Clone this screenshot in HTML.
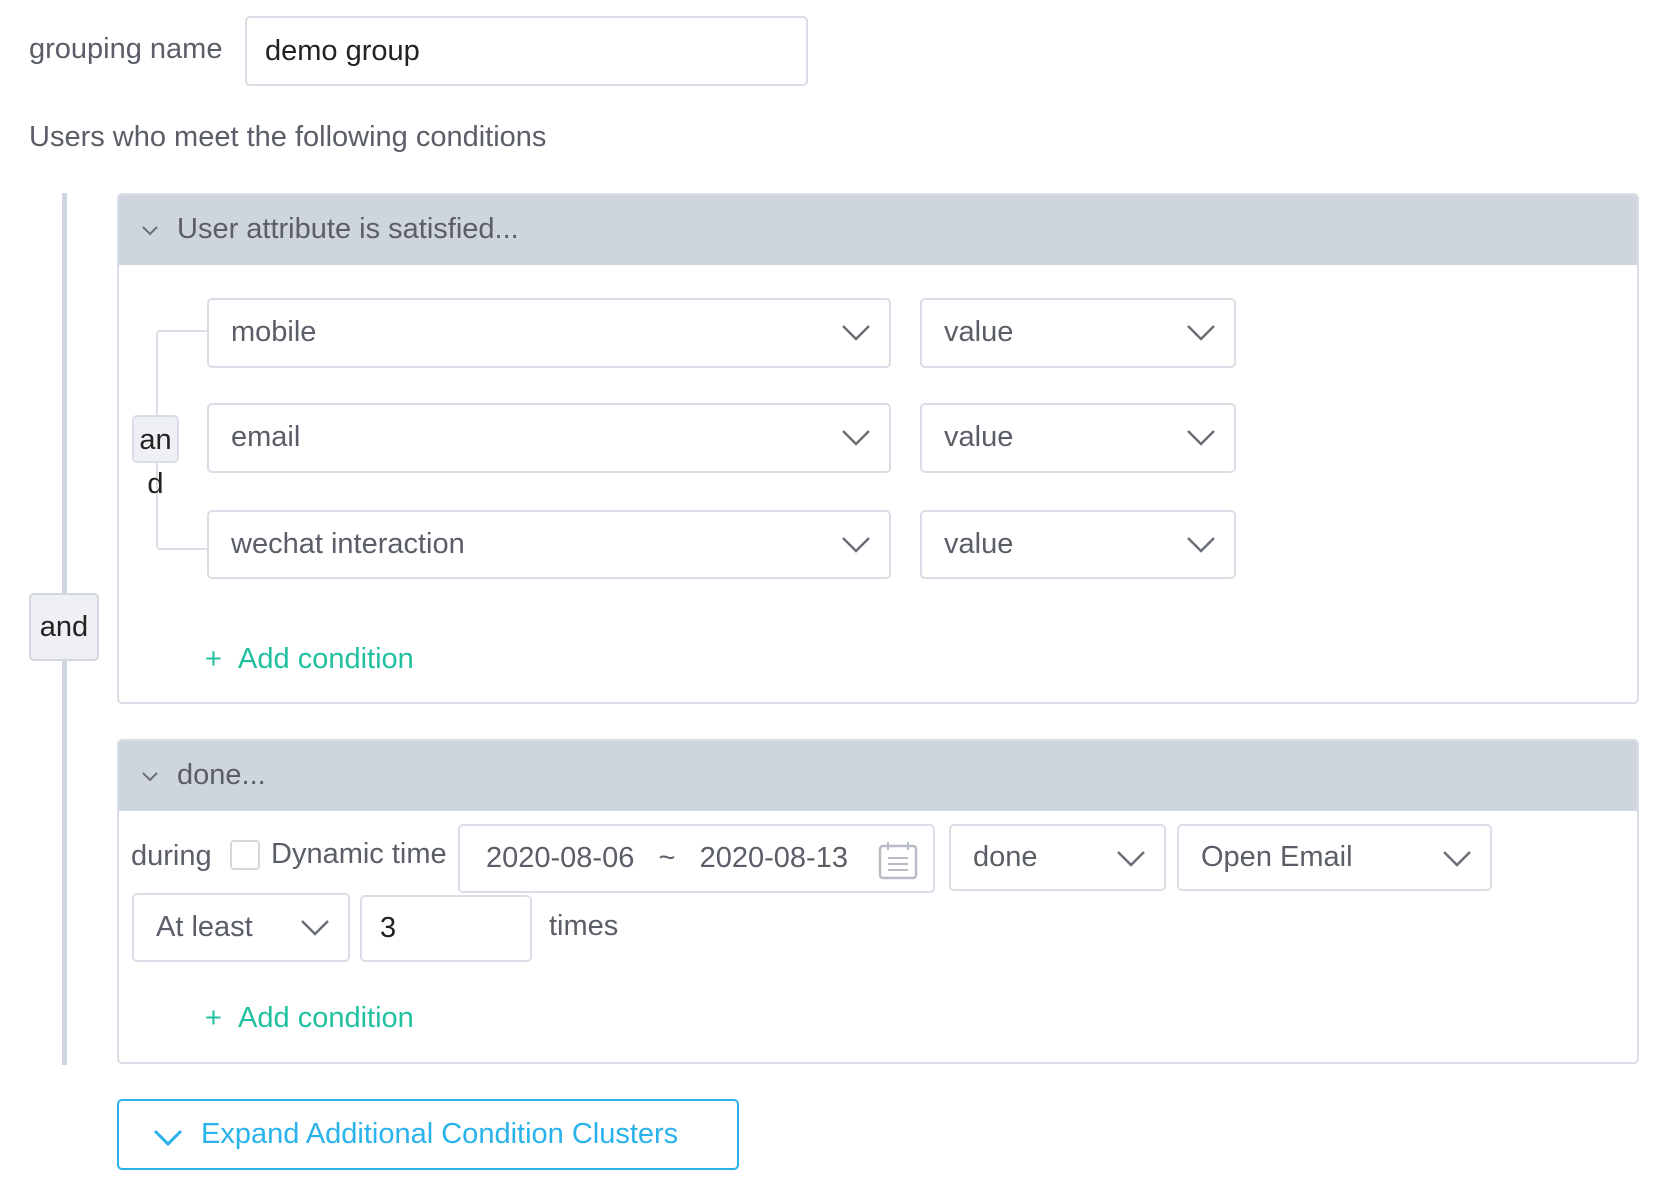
<!DOCTYPE html>
<html><head><meta charset="utf-8"><style>
*{box-sizing:border-box;margin:0;padding:0}
body{width:1660px;height:1188px;background:#fff;position:relative;overflow:hidden;font-family:"Liberation Sans",Arial,sans-serif;font-size:29px;color:#5a5e66}
.a{position:absolute}
.box{position:absolute;border:2px solid #d9dde5;border-radius:5px;background:#fff}
.sel{position:absolute;border:2px solid #d9dde5;border-radius:5px;background:#fff;line-height:64px;padding-left:22px;color:#5a5e66}
.chev{position:absolute;right:18px;top:24px;width:30px;height:18px}
.panel{position:absolute;left:117px;width:1522px;border:2px solid #d9dde5;border-radius:5px;background:#fff;overflow:hidden}
.hdr{height:70px;background:#ced5df;line-height:68px;padding-left:58px;color:#5a5e66;position:relative}
.hdr svg{position:absolute;left:22px;top:30px}
.green{color:#20c0a0}
</style></head><body>
<div class="a" style="left:29px;top:29px;line-height:40px">grouping name</div>
<div class="box" style="left:245px;top:16px;width:563px;height:70px;line-height:66px;padding-left:18px;color:#222">demo group</div>
<div class="a" style="left:29px;top:117px;line-height:40px">Users who meet the following conditions</div>

<div class="a" style="left:62px;top:193px;width:5px;height:872px;background:#ced5df"></div>
<div class="a" style="left:29px;top:593px;width:70px;height:68px;background:#eef0f3;border:2px solid #d3d8df;border-radius:5px;line-height:64px;text-align:center;color:#222">and</div>

<div class="panel" style="top:193px;height:511px">
 <div class="hdr"><svg width="18" height="12" viewBox="0 0 18 12"><path d="M2 2 L9 9 L16 2" fill="none" stroke="#6a6e76" stroke-width="2"/></svg>User attribute is satisfied...</div>
</div>
<div class="a" style="left:156px;top:330px;width:52px;height:220px;border:2px solid #d9dde5;border-right:none;border-radius:4px 0 0 4px"></div>
<div class="a" style="left:132px;top:415px;width:47px;height:48px;background:#eef0f3;border:2px solid #d9dde5;border-radius:5px"></div>
<div class="a" style="left:132px;top:418px;width:47px;line-height:44px;text-align:center;color:#222;word-break:break-all">an<br>d</div>

<div class="sel" style="left:207px;top:298px;width:684px;height:70px">mobile<svg class="chev" viewBox="0 0 30 18"><path d="M2 2 L15 15 L28 2" fill="none" stroke="#6a6e76" stroke-width="2.5"/></svg></div>
<div class="sel" style="left:920px;top:298px;width:316px;height:70px">value<svg class="chev" viewBox="0 0 30 18"><path d="M2 2 L15 15 L28 2" fill="none" stroke="#6a6e76" stroke-width="2.5"/></svg></div>
<div class="sel" style="left:207px;top:403px;width:684px;height:70px">email<svg class="chev" viewBox="0 0 30 18"><path d="M2 2 L15 15 L28 2" fill="none" stroke="#6a6e76" stroke-width="2.5"/></svg></div>
<div class="sel" style="left:920px;top:403px;width:316px;height:70px">value<svg class="chev" viewBox="0 0 30 18"><path d="M2 2 L15 15 L28 2" fill="none" stroke="#6a6e76" stroke-width="2.5"/></svg></div>
<div class="sel" style="left:207px;top:510px;width:684px;height:69px">wechat interaction<svg class="chev" viewBox="0 0 30 18"><path d="M2 2 L15 15 L28 2" fill="none" stroke="#6a6e76" stroke-width="2.5"/></svg></div>
<div class="sel" style="left:920px;top:510px;width:316px;height:69px">value<svg class="chev" viewBox="0 0 30 18"><path d="M2 2 L15 15 L28 2" fill="none" stroke="#6a6e76" stroke-width="2.5"/></svg></div>

<div class="a green" style="left:205px;top:639px;line-height:40px">+&nbsp;&nbsp;Add condition</div>

<div class="panel" style="top:739px;height:325px">
 <div class="hdr"><svg width="18" height="12" viewBox="0 0 18 12"><path d="M2 2 L9 9 L16 2" fill="none" stroke="#6a6e76" stroke-width="2"/></svg>done...</div>
</div>
<div class="a" style="left:131px;top:836px;line-height:40px">during</div>
<div class="a" style="left:230px;top:840px;width:30px;height:30px;border:2px solid #d3d8df;border-radius:4px;background:#fff"></div>
<div class="a" style="left:271px;top:834px;line-height:40px">Dynamic time</div>
<div class="box" style="left:458px;top:824px;width:477px;height:69px;line-height:65px;padding-left:26px">2020-08-06&nbsp;&nbsp;&nbsp;~&nbsp;&nbsp;&nbsp;2020-08-13
 <svg class="a" style="left:418px;top:14px" width="40" height="40" viewBox="0 0 40 40"><rect x="2" y="6" width="36" height="32" rx="3" fill="none" stroke="#b8bcc4" stroke-width="2.5"/><path d="M10 2v8M30 2v8M10 6h20M10 18h20M10 24h20M10 30h20" stroke="#b8bcc4" stroke-width="2"/></svg></div>
<div class="sel" style="left:949px;top:824px;width:217px;height:67px;line-height:63px">done<svg class="chev" viewBox="0 0 30 18"><path d="M2 2 L15 15 L28 2" fill="none" stroke="#6a6e76" stroke-width="2.5"/></svg></div>
<div class="sel" style="left:1177px;top:824px;width:315px;height:67px;line-height:63px">Open Email<svg class="chev" viewBox="0 0 30 18"><path d="M2 2 L15 15 L28 2" fill="none" stroke="#6a6e76" stroke-width="2.5"/></svg></div>
<div class="sel" style="left:132px;top:893px;width:218px;height:69px">At least<svg class="chev" viewBox="0 0 30 18"><path d="M2 2 L15 15 L28 2" fill="none" stroke="#6a6e76" stroke-width="2.5"/></svg></div>
<div class="box" style="left:360px;top:895px;width:172px;height:67px;line-height:63px;padding-left:18px;color:#222">3</div>
<div class="a" style="left:549px;top:906px;line-height:40px">times</div>
<div class="a green" style="left:205px;top:998px;line-height:40px">+&nbsp;&nbsp;Add condition</div>

<div class="a" style="left:117px;top:1099px;width:622px;height:71px;border:2px solid #2ab2ec;border-radius:5px;line-height:67px;padding-left:82px;color:#2ab2ec">
 <svg class="a" style="left:34px;top:28px" width="30" height="18" viewBox="0 0 30 18"><path d="M2 2 L15 15 L28 2" fill="none" stroke="#2ab2ec" stroke-width="3"/></svg>Expand Additional Condition Clusters</div>
</body></html>
